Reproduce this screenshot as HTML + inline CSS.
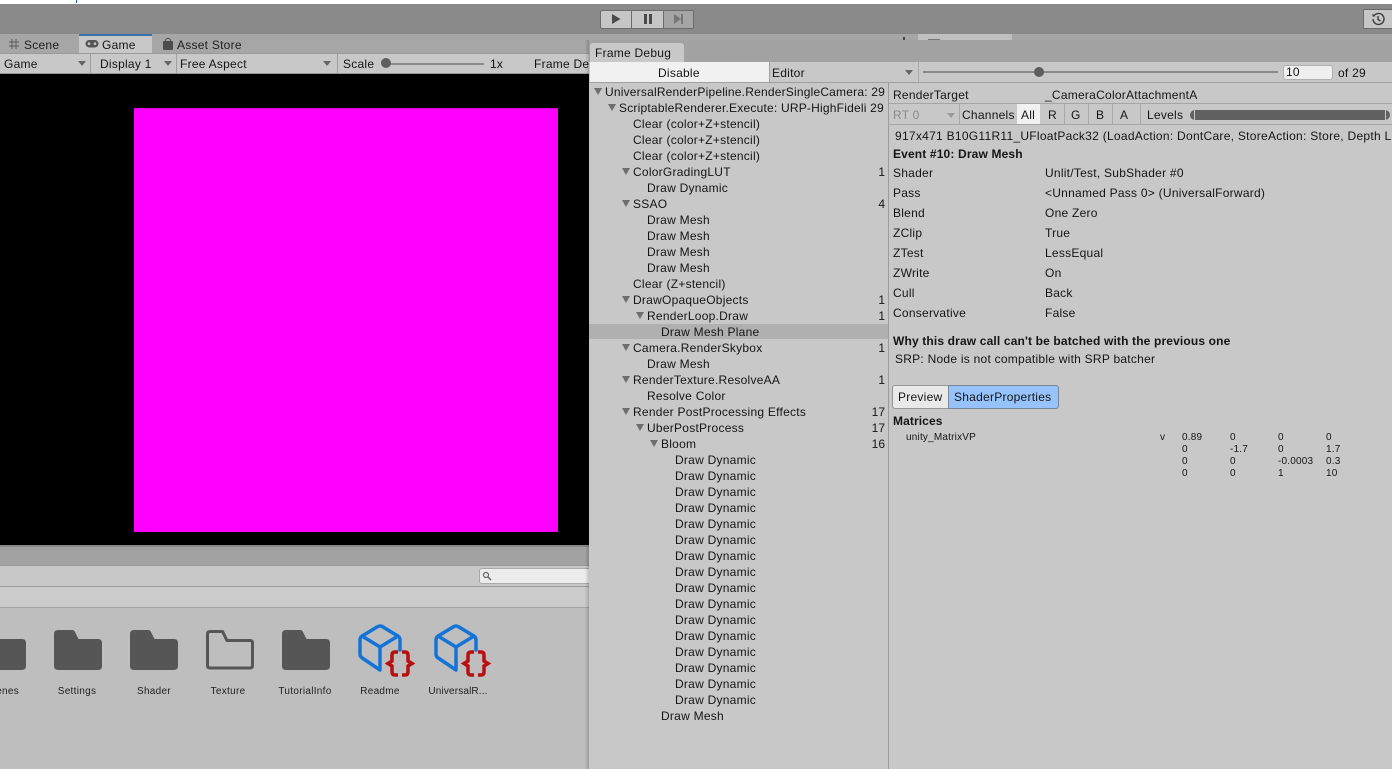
<!DOCTYPE html>
<html><head><meta charset="utf-8"><style>
*{box-sizing:border-box}
html,body{margin:0;padding:0;width:1392px;height:769px;overflow:hidden}
body{position:relative;background:#bebebe;font-family:"Liberation Sans",sans-serif;font-size:12px;color:#111}
.b{position:absolute}
.t{position:absolute;white-space:nowrap;line-height:16px;height:16px;letter-spacing:.25px;color:#151515}
.r{position:absolute;white-space:nowrap;line-height:16px;height:16px;right:507px;color:#151515}
.a{position:absolute;width:0;height:0;margin-left:2px;border-left:4px solid transparent;border-right:4px solid transparent;border-top:7px solid #6e6e6e}
.d{position:absolute;width:0;height:0;border-left:4px solid transparent;border-right:4px solid transparent;border-top:5px solid #666}
.s{font-size:10px;letter-spacing:.2px}
.l{position:absolute;text-align:center;font-size:10px;line-height:14px;width:76px;letter-spacing:.3px;color:#222}
svg{position:absolute;display:block}
</style></head><body>
<div class="b" style="left:0;top:0;width:1392px;height:4px;background:#fff"></div>
<div class="b" style="left:76px;top:0;width:1px;height:3px;background:#1c5fd0"></div>
<div class="b" style="left:0;top:4px;width:1392px;height:30px;background:#8a8a8a"></div>
<div class="b" style="left:0;top:34px;width:1392px;height:19px;background:#a6a6a6"></div>

<div class="b" style="left:600px;top:10px;width:94px;height:19px;background:#c6c6c6;border:1px solid #6c6c6c;border-radius:2px"></div>
<div class="b" style="left:663px;top:11px;width:30px;height:17px;background:#a5a5a5"></div>
<div class="b" style="left:631px;top:10px;width:1px;height:19px;background:#6c6c6c"></div>
<div class="b" style="left:663px;top:10px;width:1px;height:19px;background:#6c6c6c"></div>
<svg style="left:600px;top:10px" width="94" height="19"><path d="M12 4v10l8.500-5z" fill="#4a4a4a"/><path d="M44 4h3v10h-3zM49 4h3v10h-3z" fill="#4a4a4a"/><path d="M74 4v10l7-5z" fill="#777"/><path d="M81 4h2v10h-2z" fill="#777"/></svg>

<div class="b" style="left:1363px;top:9px;width:29px;height:20px;background:#c6c6c6;border:1px solid #6c6c6c;border-right:0"></div>
<svg style="left:1371px;top:12px" width="14" height="14"><path d="M3.200 3.500A5.500 5.500 0 1 1 2 7" fill="none" stroke="#3c3c3c" stroke-width="1.400"/><path d="M1.500 1.500v3h3z" fill="#3c3c3c"/><path d="M7 4v3.500l2.500 1.500" fill="none" stroke="#3c3c3c" stroke-width="1.400"/></svg>

<div class="b" style="left:0;top:36px;width:79px;height:17px;background:#a6a6a6"></div>
<svg style="left:8px;top:37px" width="12" height="14"><path d="M4 2v10M8 2v10M1 5h10M1 9h10" stroke="#5c5c5c" stroke-width="1" fill="none"/></svg>
<span class="t" style="left:24px;top:37px;color:#202020">Scene</span>
<div class="b" style="left:79px;top:34px;width:73px;height:19px;background:#c8c8c8"></div>
<div class="b" style="left:79px;top:34px;width:73px;height:2px;background:#3a72b0"></div>
<svg style="left:85px;top:39px" width="14" height="10"><rect x="0.500" y="1" width="13" height="7.500" rx="3.700" fill="#555"/><circle cx="4" cy="4.700" r="1.300" fill="#c8c8c8"/><circle cx="10" cy="4.700" r="1.300" fill="#c8c8c8"/></svg>
<span class="t" style="left:102px;top:37px">Game</span>
<svg style="left:162px;top:37px" width="12" height="14"><rect x="1" y="4" width="10" height="9" rx="1" fill="#4d4d4d"/><path d="M3.500 5V3.500a2.500 2 0 0 1 5 0V5" stroke="#4d4d4d" fill="none"/></svg>
<span class="t" style="left:177px;top:37px;color:#202020">Asset Store</span>

<div class="b" style="left:0;top:53px;width:600px;height:21px;background:#c8c8c8;border-top:1px solid #9a9a9a;border-bottom:1px solid #9a9a9a"></div>
<span class="t" style="left:4px;top:56px">Game</span><i class="d" style="left:78px;top:61px"></i>
<div class="b" style="left:90px;top:54px;width:1px;height:19px;background:#9f9f9f"></div>
<span class="t" style="left:100px;top:56px">Display 1</span><i class="d" style="left:164px;top:61px"></i>
<div class="b" style="left:176px;top:54px;width:1px;height:19px;background:#9f9f9f"></div>
<span class="t" style="left:180px;top:56px">Free Aspect</span><i class="d" style="left:323px;top:61px"></i>
<div class="b" style="left:337px;top:54px;width:1px;height:19px;background:#9f9f9f"></div>
<span class="t" style="left:343px;top:56px">Scale</span>
<div class="b" style="left:386px;top:63px;width:98px;height:2px;background:#8a8a8a"></div>
<div class="b" style="left:381px;top:58px;width:10px;height:10px;border-radius:50%;background:#5e5e5e"></div>
<span class="t" style="left:490px;top:56px">1x</span>
<span class="t" style="left:534px;top:56px">Frame Debugger</span>

<div class="b" style="left:0;top:74px;width:600px;height:471px;background:#000"></div>
<div class="b" style="left:134px;top:108px;width:424px;height:424px;background:#f0f"></div>
<div class="b" style="left:134px;top:108px;width:424px;height:1px;background:#d800d8"></div>

<div class="b" style="left:0;top:545px;width:600px;height:2px;background:#8a8a8a"></div>
<div class="b" style="left:0;top:547px;width:600px;height:19px;background:#a2a2a2"></div>
<div class="b" style="left:0;top:565px;width:600px;height:22px;background:#c8c8c8;border-top:1px solid #999;border-bottom:1px solid #999"></div>
<div class="b" style="left:479px;top:568px;width:120px;height:16px;background:#ececec;border:1px solid #aaa;border-radius:3px"></div>
<svg style="left:482px;top:571px" width="10" height="10"><circle cx="4" cy="4" r="2.500" fill="none" stroke="#666" stroke-width="1.200"/><path d="M6 6l3 3" stroke="#666" stroke-width="1.500"/></svg>
<div class="b" style="left:0;top:587px;width:600px;height:21px;background:#cbcbcb;border-bottom:1px solid #a5a5a5"></div>

<svg style="left:0;top:620px" width="500" height="64">
<g transform="translate(0,5)">
<path d="M0 14h22q4 0 4 4v23q0 4-4 4H0z" fill="#565656"/>
<path d="M54 9q0-4 4-4h14q2 0 3 2l3.500 7H98q4 0 4 4v23q0 4-4 4H58q-4 0-4-4z" fill="#565656"/>
<path d="M130 9q0-4 4-4h14q2 0 3 2l3.500 7H174q4 0 4 4v23q0 4-4 4h-40q-4 0-4-4z" fill="#565656"/>
<path d="M207.500 9q0-2.500 2.500-2.500h12.500l4.500 9h23q2.500 0 2.500 2.500v22.500q0 2.500-2.500 2.500h-40q-2.500 0-2.500-2.500z" fill="none" stroke="#565656" stroke-width="3"/>
<path d="M282 9q0-4 4-4h14q2 0 3 2l3.500 7H326q4 0 4 4v23q0 4-4 4h-40q-4 0-4-4z" fill="#565656"/>
</g>
<g fill="none" stroke="#1473d6" stroke-width="3.500" stroke-linejoin="round" stroke-linecap="round">
<path d="M400 30V20q0-3-3-4.500L383 7q-3-2-6 0l-14 8.500q-3 1.500-3 4.500v14q0 3 3 4.500L380 50V27M362 16l18 11 18-11"/>
<path d="M476 30V20q0-3-3-4.500L459 7q-3-2-6 0l-14 8.500q-3 1.500-3 4.500v14q0 3 3 4.500L456 50V27M438 16l18 11 18-11"/>
</g>
<g fill="none" stroke="#b80f0f" stroke-width="3.500">
<path d="M398 32h-3q-3 0-3 3v6l-4 2.500 4 2.500v6q0 3 3 3h3M402 32h3q3 0 3 3v6l4 2.500-4 2.500v6q0 3-3 3h-3"/>
<path d="M474 32h-3q-3 0-3 3v6l-4 2.500 4 2.500v6q0 3 3 3h3M478 32h3q3 0 3 3v6l4 2.500-4 2.500v6q0 3-3 3h-3"/>
</g>
</svg>
<div class="b" style="left:0;top:685px;width:19px;height:14px;overflow:hidden"><span class="t" style="right:0;top:-1px;font-size:10px;letter-spacing:.3px;color:#222">Scenes</span></div>
<div class="l" style="left:39px;top:685px">Settings</div>
<div class="l" style="left:116px;top:685px">Shader</div>
<div class="l" style="left:190px;top:685px">Texture</div>
<div class="l" style="left:267px;top:685px">TutorialInfo</div>
<div class="l" style="left:342px;top:685px">Readme</div>
<div class="l" style="left:420px;top:685px;letter-spacing:.15px">UniversalR...</div>

<div class="b" style="left:585px;top:40px;width:4px;height:729px;background:linear-gradient(90deg,rgba(0,0,0,0),rgba(0,0,0,.18))"></div>
<div class="b" style="left:918px;top:34px;width:94px;height:6px;background:#c0c0c0"></div>
<div class="b" style="left:903px;top:37px;width:2px;height:3px;background:#444"></div>
<div class="b" style="left:928px;top:39px;width:12px;height:1px;background:#777"></div>
<div class="b" style="left:589px;top:40px;width:803px;height:729px;background:#c8c8c8"></div>
<div class="b" style="left:589px;top:40px;width:803px;height:22px;background:#a2a2a2"></div>
<div class="b" style="left:590px;top:43px;width:94px;height:19px;background:#c8c8c8;border-radius:3px 3px 0 0"></div>
<span class="t" style="left:595px;top:45px">Frame Debug</span>
<div class="b" style="left:589px;top:62px;width:803px;height:21px;background:#c8c8c8;border-bottom:1px solid #a0a0a0"></div>
<div class="b" style="left:590px;top:62px;width:179px;height:20px;background:#f1f1f1"></div>
<span class="t" style="left:658px;top:65px">Disable</span>
<div class="b" style="left:769px;top:62px;width:1px;height:20px;background:#9f9f9f"></div>
<span class="t" style="left:772px;top:65px">Editor</span><i class="d" style="left:905px;top:70px"></i>
<div class="b" style="left:918px;top:62px;width:1px;height:20px;background:#aaa"></div>
<div class="b" style="left:923px;top:71px;width:355px;height:2px;background:#8a8a8a"></div>
<div class="b" style="left:1034px;top:67px;width:10px;height:10px;border-radius:50%;background:#5e5e5e"></div>
<div class="b" style="left:1283px;top:65px;width:50px;height:15px;background:#efefef;border:1px solid #b0b0b0;border-radius:3px"></div>
<span class="t" style="left:1286px;top:64px">10</span>
<span class="t" style="left:1338px;top:65px">of 29</span>
<div class="b" style="left:888px;top:83px;width:1px;height:686px;background:#9c9c9c"></div>

<div class="b" style="left:589px;top:324px;width:299px;height:15px;background:#b0b0b0"></div>

<i class="a" style="left:592px;top:88px"></i><span class="t" style="left:605px;top:84px;letter-spacing:.2px">UniversalRenderPipeline.RenderSingleCamera: 29</span>
<i class="a" style="left:606px;top:104px"></i><span class="t" style="left:619px;top:100px;letter-spacing:.21px">ScriptableRenderer.Execute: URP-HighFideli 29</span>
<span class="t" style="left:633px;top:116px">Clear (color+Z+stencil)</span>
<span class="t" style="left:633px;top:132px">Clear (color+Z+stencil)</span>
<span class="t" style="left:633px;top:148px">Clear (color+Z+stencil)</span>
<i class="a" style="left:620px;top:168px"></i><span class="t" style="left:633px;top:164px">ColorGradingLUT</span><span class="r" style="top:164px">1</span>
<span class="t" style="left:647px;top:180px">Draw Dynamic</span>
<i class="a" style="left:620px;top:200px"></i><span class="t" style="left:633px;top:196px">SSAO</span><span class="r" style="top:196px">4</span>
<span class="t" style="left:647px;top:212px">Draw Mesh</span>
<span class="t" style="left:647px;top:228px">Draw Mesh</span>
<span class="t" style="left:647px;top:244px">Draw Mesh</span>
<span class="t" style="left:647px;top:260px">Draw Mesh</span>
<span class="t" style="left:633px;top:276px">Clear (Z+stencil)</span>
<i class="a" style="left:620px;top:296px"></i><span class="t" style="left:633px;top:292px">DrawOpaqueObjects</span><span class="r" style="top:292px">1</span>
<i class="a" style="left:634px;top:312px"></i><span class="t" style="left:647px;top:308px">RenderLoop.Draw</span><span class="r" style="top:308px">1</span>
<span class="t" style="left:661px;top:324px">Draw Mesh Plane</span>
<i class="a" style="left:620px;top:344px"></i><span class="t" style="left:633px;top:340px">Camera.RenderSkybox</span><span class="r" style="top:340px">1</span>
<span class="t" style="left:647px;top:356px">Draw Mesh</span>
<i class="a" style="left:620px;top:376px"></i><span class="t" style="left:633px;top:372px">RenderTexture.ResolveAA</span><span class="r" style="top:372px">1</span>
<span class="t" style="left:647px;top:388px">Resolve Color</span>
<i class="a" style="left:620px;top:408px"></i><span class="t" style="left:633px;top:404px">Render PostProcessing Effects</span><span class="r" style="top:404px">17</span>
<i class="a" style="left:634px;top:424px"></i><span class="t" style="left:647px;top:420px">UberPostProcess</span><span class="r" style="top:420px">17</span>
<i class="a" style="left:648px;top:440px"></i><span class="t" style="left:661px;top:436px">Bloom</span><span class="r" style="top:436px">16</span>
<span class="t" style="left:675px;top:452px">Draw Dynamic</span>
<span class="t" style="left:675px;top:468px">Draw Dynamic</span>
<span class="t" style="left:675px;top:484px">Draw Dynamic</span>
<span class="t" style="left:675px;top:500px">Draw Dynamic</span>
<span class="t" style="left:675px;top:516px">Draw Dynamic</span>
<span class="t" style="left:675px;top:532px">Draw Dynamic</span>
<span class="t" style="left:675px;top:548px">Draw Dynamic</span>
<span class="t" style="left:675px;top:564px">Draw Dynamic</span>
<span class="t" style="left:675px;top:580px">Draw Dynamic</span>
<span class="t" style="left:675px;top:596px">Draw Dynamic</span>
<span class="t" style="left:675px;top:612px">Draw Dynamic</span>
<span class="t" style="left:675px;top:628px">Draw Dynamic</span>
<span class="t" style="left:675px;top:644px">Draw Dynamic</span>
<span class="t" style="left:675px;top:660px">Draw Dynamic</span>
<span class="t" style="left:675px;top:676px">Draw Dynamic</span>
<span class="t" style="left:675px;top:692px">Draw Dynamic</span>
<span class="t" style="left:661px;top:708px">Draw Mesh</span>

<span class="t" style="left:893px;top:87px">RenderTarget</span>
<span class="t" style="left:1045px;top:87px">_CameraColorAttachmentA</span>
<div class="b" style="left:889px;top:103px;width:503px;height:1px;background:#a5a5a5"></div>
<div class="b" style="left:889px;top:124px;width:503px;height:1px;background:#a5a5a5"></div>
<span class="t" style="left:893px;top:107px;color:#8a8a8a">RT 0</span><i class="d" style="left:947px;top:113px;border-top-color:#9a9a9a"></i>
<div class="b" style="left:959px;top:104px;width:1px;height:20px;background:#a8a8a8"></div>
<span class="t" style="left:962px;top:107px">Channels</span>
<div class="b" style="left:1017px;top:104px;width:23px;height:20px;background:#f1f1f1"></div>
<span class="t" style="left:1021px;top:107px">All</span>
<span class="t" style="left:1048px;top:107px">R</span><div class="b" style="left:1064px;top:104px;width:1px;height:20px;background:#a8a8a8"></div>
<span class="t" style="left:1071px;top:107px">G</span><div class="b" style="left:1088px;top:104px;width:1px;height:20px;background:#a8a8a8"></div>
<span class="t" style="left:1096px;top:107px">B</span><div class="b" style="left:1112px;top:104px;width:1px;height:20px;background:#a8a8a8"></div>
<span class="t" style="left:1120px;top:107px">A</span><div class="b" style="left:1140px;top:104px;width:1px;height:20px;background:#a8a8a8"></div>
<span class="t" style="left:1147px;top:107px">Levels</span>
<div class="b" style="left:1190px;top:110px;width:200px;height:10px;background:#616161;border-radius:5px"></div>
<div class="b" style="left:1194px;top:110px;width:1px;height:10px;background:#c8c8c8"></div>
<div class="b" style="left:1385px;top:110px;width:1px;height:10px;background:#c8c8c8"></div>

<div class="b" style="left:895px;top:128px;width:497px;height:16px;overflow:hidden"><span class="t" style="left:0;top:0;letter-spacing:.28px">917x471 B10G11R11_UFloatPack32 (LoadAction: DontCare, StoreAction: Store, Depth Load</span></div>
<span class="t" style="left:893px;top:146px;font-weight:bold;letter-spacing:.15px">Event #10: Draw Mesh</span>
<span class="t" style="left:893px;top:165px">Shader</span><span class="t" style="left:1045px;top:165px">Unlit/Test, SubShader #0</span>
<span class="t" style="left:893px;top:185px">Pass</span><span class="t" style="left:1045px;top:185px">&lt;Unnamed Pass 0&gt; (UniversalForward)</span>
<span class="t" style="left:893px;top:205px">Blend</span><span class="t" style="left:1045px;top:205px">One Zero</span>
<span class="t" style="left:893px;top:225px">ZClip</span><span class="t" style="left:1045px;top:225px">True</span>
<span class="t" style="left:893px;top:245px">ZTest</span><span class="t" style="left:1045px;top:245px">LessEqual</span>
<span class="t" style="left:893px;top:265px">ZWrite</span><span class="t" style="left:1045px;top:265px">On</span>
<span class="t" style="left:893px;top:285px">Cull</span><span class="t" style="left:1045px;top:285px">Back</span>
<span class="t" style="left:893px;top:305px">Conservative</span><span class="t" style="left:1045px;top:305px">False</span>
<span class="t" style="left:893px;top:333px;font-weight:bold;letter-spacing:.15px">Why this draw call can't be batched with the previous one</span>
<span class="t" style="left:895px;top:351px">SRP: Node is not compatible with SRP batcher</span>

<div class="b" style="left:892px;top:385px;width:57px;height:24px;background:#e9e9e9;border:1px solid #979797;border-right:0;border-radius:3px 0 0 3px"></div>
<div class="b" style="left:948px;top:385px;width:111px;height:24px;background:#96c3fb;border:1px solid #7a8796;border-radius:0 3px 3px 0"></div>
<span class="t" style="left:898px;top:389px">Preview</span>
<span class="t" style="left:954px;top:389px">ShaderProperties</span>
<span class="t" style="left:893px;top:413px;font-weight:bold;letter-spacing:.1px">Matrices</span>

<span class="t s" style="left:906px;top:430px">unity_MatrixVP</span>
<span class="t s" style="left:1160px;top:430px">v</span>
<span class="t s" style="left:1182px;top:430px">0.89</span><span class="t s" style="left:1230px;top:430px">0</span><span class="t s" style="left:1278px;top:430px">0</span><span class="t s" style="left:1326px;top:430px">0</span>
<span class="t s" style="left:1182px;top:442px">0</span><span class="t s" style="left:1230px;top:442px">-1.7</span><span class="t s" style="left:1278px;top:442px">0</span><span class="t s" style="left:1326px;top:442px">1.7</span>
<span class="t s" style="left:1182px;top:454px">0</span><span class="t s" style="left:1230px;top:454px">0</span><span class="t s" style="left:1278px;top:454px">-0.0003</span><span class="t s" style="left:1326px;top:454px">0.3</span>
<span class="t s" style="left:1182px;top:466px">0</span><span class="t s" style="left:1230px;top:466px">0</span><span class="t s" style="left:1278px;top:466px">1</span><span class="t s" style="left:1326px;top:466px">10</span>
</body></html>
